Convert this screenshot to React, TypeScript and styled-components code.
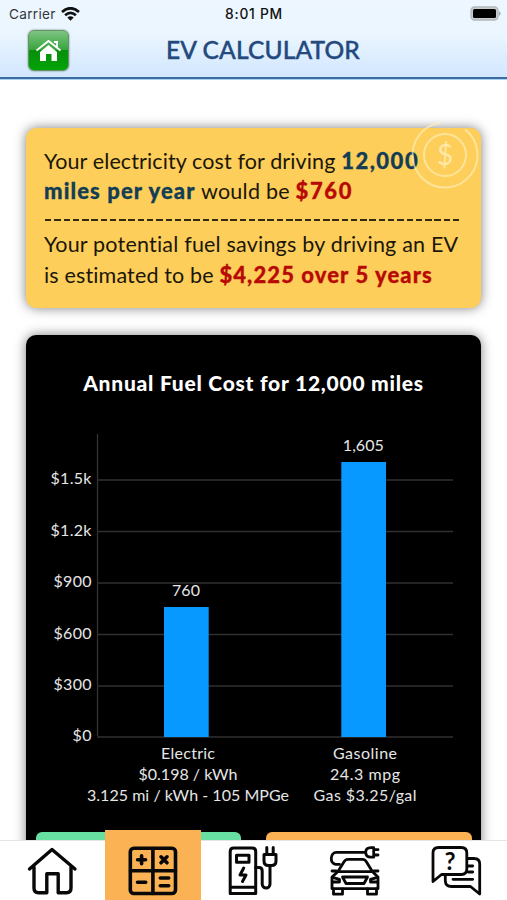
import React from "react";
import styled, { createGlobalStyle } from "styled-components";

const Global = createGlobalStyle`
  * { box-sizing: border-box; }
  html, body { margin: 0; padding: 0; background: #fff; }
  body { font-family: Lato, "Open Sans", sans-serif; overflow: hidden; }
`;

const Screen = styled.div`
  width: 507px;
  height: 900px;
  display: flex;
  flex-direction: column;
  overflow: hidden;
  background: #fff;
`;

const Header = styled.header`
  flex: none;
  height: 80px;
  background: linear-gradient(#eef7ff 0%, #eaf5ff 45%, #d2e7ff 96%);
  border-bottom: 1px solid #a9d2f5;
  box-shadow: inset 0 -2px 0 #3c6d9e;
`;

const StatusBar = styled.div`
  display: grid;
  grid-template-columns: 1fr auto 1fr;
  align-items: center;
  height: 28px;
  padding: 0 6px 0 9px;
  font: 400 13.6px/28px Inter, sans-serif;
  color: #33363a;
`;

const Carrier = styled.div`
  display: flex;
  align-items: center;
  gap: 5px;
  letter-spacing: 0.3px;
`;

const Clock = styled.div`
  margin-left: -2px;
  font-weight: 500;
  font-size: 13.8px;
  letter-spacing: 0.75px;
  color: #111;
`;

const Battery = styled.svg`
  justify-self: end;
  display: block;
  margin-top: -2px;
`;

const TitleRow = styled.div`
  display: grid;
  grid-template-columns: 28px 41px 1fr 50px;
  align-items: center;
  height: 45px;
`;

const HomeButton = styled.button`
  grid-column: 2;
  width: 41px;
  height: 41px;
  padding: 0;
  display: grid;
  place-items: center;
  border: 1px solid #66926b;
  border-radius: 6px;
  background: linear-gradient(#7fc484 0%, #35a43b 49%, #078f0c 50%, #03a307 100%);
  box-shadow: 0 0 2px #587b5c;
`;

const Title = styled.h1`
  grid-column: 3;
  margin: -2px 0 0 -1px;
  padding-left: 98px;
  font-size: 24.6px;
  font-weight: 500;
  line-height: 44px;
  letter-spacing: 0.1px;
  color: #23497d;
  -webkit-text-stroke: 0.4px #23497d;
  white-space: nowrap;
`;

const Content = styled.main`
  flex: 1;
  min-height: 0;
  padding: 48px 26px 0;
  overflow: hidden;
`;

const Summary = styled.section`
  position: relative;
  height: 180px;
  padding: 18px 18px 0;
  border-radius: 10px;
  background: #fdce5a;
  box-shadow: 0 0 12px rgba(0, 0, 0, 0.5);
  color: #1a1608;
`;

const Line = styled.div<{ $spacing: number }>`
  height: 29.5px;
  font-size: 21.5px;
  line-height: 29.5px;
  letter-spacing: ${(p) => p.$spacing}px;
  white-space: nowrap;
`;

const Strong = styled.b<{ $tone: "navy" | "red"; $spacing?: number }>`
  font-size: 22px;
  font-weight: 900;
  letter-spacing: ${(p) => p.$spacing ?? 1.1}px;
  color: ${(p) => (p.$tone === "navy" ? "#123d55" : "#b80a05")};
  -webkit-text-stroke: 0.3px currentColor;
`;

const Rule = styled.div`
  width: 417px;
  height: 2px;
  margin: 14px 0 9px 1px;
  background: repeating-linear-gradient(90deg, #33290f 0 6.5px, transparent 6.5px 9.27px);
`;

const Coin = styled.svg`
  position: absolute;
  top: -7px;
  right: 1px;
`;

const ChartCard = styled.section`
  height: 560px;
  margin-top: 27px;
  padding-top: 34px;
  border-radius: 10px;
  background: #000;
  box-shadow: 0 0 12px rgba(0, 0, 0, 0.5);
  color: #e4e4e4;
`;

const ChartTitle = styled.h2`
  margin: 0;
  height: 28px;
  text-align: center;
  font-size: 21px;
  font-weight: 900;
  line-height: 28px;
  letter-spacing: 0.75px;
  color: #fff;
  white-space: nowrap;
`;

const Plot = styled.svg`
  display: block;
  margin-top: 27px;
  font-family: Lato, sans-serif;
  font-size: 16px;
`;

const Actions = styled.div`
  display: grid;
  grid-template-columns: 205px 206px;
  gap: 25px;
  padding-left: 10px;
  margin-top: 1px;
`;

const Action = styled.button<{ $color: string }>`
  height: 44px;
  border: 0;
  border-radius: 6px;
  background: ${(p) => p.$color};
`;

const TabBar = styled.nav`
  position: relative;
  flex: none;
  height: 60px;
  display: grid;
  grid-template-columns: 105px 96px 102px 102px 102px;
  grid-template-rows: 59px;
  align-items: end;
  background: #fff;
  border-top: 1px solid #e4e4e4;
`;

const Tab = styled.button<{ $active?: boolean }>`
  height: ${(p) => (p.$active ? 70 : 59)}px;
  padding: 0;
  border: 0;
  display: grid;
  justify-items: center;
  align-items: end;
  background: ${(p) => (p.$active ? "#fbb254" : "transparent")};
`;

const Glyph = styled.svg<{ $weight?: number }>`
  display: block;
  width: 60px;
  height: 59px;
  fill: none;
  stroke: #080808;
  stroke-width: ${(p) => p.$weight ?? 3};
  stroke-linecap: round;
  stroke-linejoin: round;
`;

const GlyphMark = styled.text`
  font: 700 24px Lato, sans-serif;
  fill: #080808;
  stroke: none;
  text-anchor: middle;
`;

const CoinMark = styled.text`
  font: 400 28px Lato, sans-serif;
  fill: #ffe9a8;
  stroke: none;
  text-anchor: middle;
`;

const ticks = [
  { label: "$1.5k", y: 53, w: 41 },
  { label: "$1.2k", y: 104.5, w: 41 },
  { label: "$900", y: 156, w: 38 },
  { label: "$600", y: 207.5, w: 38 },
  { label: "$300", y: 259, w: 38 },
  { label: "$0", y: 310, w: 19 },
];

const bars = [
  { value: "760", x: 138, y: 181, labelW: 28, captions: [["Electric", 54], ["$0.198 / kWh", 99], ["3.125 mi / kWh - 105 MPGe", 202]], cx: 162 },
  { value: "1,605", x: 315.3, y: 36, labelW: 41, captions: [["Gasoline", 64], ["24.3 mpg", 70], ["Gas $3.25/gal", 103]], cx: 339 },
] as const;

function Chart() {
  return (
    <Plot width="455" height="407" viewBox="0 0 455 407" fill="#e6e6e6">
      <path d="M71.5 10V312" stroke="#333" strokeWidth="1.3" />
      {ticks.map((t) => (
        <g key={t.label}>
          <path d={`M71 ${t.y + 3}H427`} stroke="#303030" strokeWidth="1.5" />
          <text x={65.5 - t.w} y={t.y + 7} textLength={t.w}>{t.label}</text>
        </g>
      ))}
      {bars.map((b) => (
        <g key={b.value}>
          <rect x={b.x} y={b.y + 2} width="44.7" height={311 - b.y} fill="#0799ff" />
          <text x={b.x + 22 - b.labelW / 2} y={b.y - 9} textLength={b.labelW}>{b.value}</text>
          {b.captions.map(([text, w], i) => (
            <text key={text} x={b.cx - w / 2} y={334.8 + i * 21.3} textLength={w}>{text}</text>
          ))}
        </g>
      ))}
    </Plot>
  );
}

export default function App() {
  return (
    <Screen>
      <Global />
      <Header>
        <StatusBar>
          <Carrier>
            Carrier
            <svg width="19" height="14" viewBox="0 0 19 14" fill="none" stroke="#111" strokeWidth="2.7">
              <path d="M1 5Q9.5-2.5 18 5M4.1 8.3Q9.5 3.5 14.9 8.3" />
              <path d="M6.3 10.6Q9.5 7.9 12.7 10.6L9.5 13.7Z" fill="#111" stroke="none" />
            </svg>
          </Carrier>
          <Clock>8:01 PM</Clock>
          <Battery width="31" height="15" viewBox="0 0 31 15">
            <rect x="1" y="1" width="27" height="13" rx="3.5" fill="#c9cdd0" stroke="#b3b8bb" strokeWidth="1.3" />
            <rect x="3" y="3" width="23" height="9" rx="1.5" fill="#000" />
            <path d="M29 5Q32 7.5 29 10Z" fill="#9da3a8" />
          </Battery>
        </StatusBar>
        <TitleRow>
          <HomeButton aria-label="Home">
            <svg width="27" height="25" viewBox="0 0 27 25">
              <path d="M5 14L13.5 7L22 14V23H16.5V16H11V23H5Z" fill="#fff" />
              <path d="M1.5 12.5L13.5 3L25.5 12.5M19 4H22V9" fill="none" stroke="#fff" strokeWidth="1.8" />
            </svg>
          </HomeButton>
          <Title>EV CALCULATOR</Title>
        </TitleRow>
      </Header>
      <Content>
        <Summary>
          <Line $spacing={0.12}>Your electricity cost for driving <Strong $tone="navy" $spacing={1.5}>12,000</Strong></Line>
          <Line $spacing={0.25}><Strong $tone="navy">miles per year</Strong> would be <Strong $tone="red" $spacing={1.6}>$760</Strong></Line>
          <Rule />
          <Line $spacing={0.2}>Your potential fuel savings by driving an EV</Line>
          <Line $spacing={0.15}>is estimated to be <Strong $tone="red">$4,225 over 5 years</Strong></Line>
          <Coin width="70" height="70" viewBox="0 0 70 70" fill="none" stroke="#fff0be" strokeOpacity=".65" strokeWidth="2">
            <circle cx="35" cy="34" r="32.5" strokeDasharray="178 26" transform="rotate(-52 35 34)" />
            <circle cx="35" cy="34" r="21" />
            <CoinMark x="35" y="44">$</CoinMark>
          </Coin>
        </Summary>
        <ChartCard>
          <ChartTitle>Annual Fuel Cost for 12,000 miles</ChartTitle>
          <Chart />
          <Actions>
            <Action $color="#67dfa2" aria-label="Electric" />
            <Action $color="#fbb254" aria-label="Gasoline" />
          </Actions>
        </ChartCard>
      </Content>
      <TabBar>
        <Tab aria-label="Home">
          <Glyph viewBox="0 0 60 59" $weight={3.4}>
            <path d="M6.5 28L29 8.5L52 28M11 26V47Q11 51.7 15.5 51.7H23.8V32.7H35.2V51.7H43.5Q48 51.7 48 47V26" />
          </Glyph>
        </Tab>
        <Tab $active aria-label="Calculator">
          <Glyph viewBox="0 0 60 59" $weight={3.6}>
            <rect x="7.3" y="7.3" width="45.2" height="45.2" rx="3.5" />
            <path d="M29.9 7.5V52.5M7.5 29.8H52.5M18.6 14.8V22.8M14.6 18.8H22.6M38 15.8L44 21.8M44 15.8L38 21.8M14.5 41.2H22.7M37.3 37H45.7M37.3 44.7H45.7" />
          </Glyph>
        </Tab>
        <Tab aria-label="Charging">
          <Glyph viewBox="0 0 60 59" $weight={3}>
            <path d="M8.2 52.5V10.5Q8.2 7 11.7 7H30Q33.7 7 33.7 10.5V52.5ZM8.2 46.2H33.7" />
            <rect x="14.5" y="14.2" width="12.5" height="7" />
            <path d="M21.7 27L18 34H24L20.5 40.5" />
            <path d="M33.7 26.5H37Q40.2 26.5 40.2 30V43A3.9 4 0 0 0 48 43V24.5M42 13.5H54V20Q54 24.5 49.5 24.5H46.5Q42 24.5 42 20ZM44.8 6.5V13M51.2 6.5V13" />
          </Glyph>
        </Tab>
        <Tab aria-label="Vehicles">
          <Glyph viewBox="0 0 60 59" $weight={2.8}>
            <path d="M15.5 23.3H11.5C5.5 22.5 6 11.3 12.5 11.3H41.5M49.7 6.7H47C43.5 6.7 41.7 8.5 41.7 11.3S43.5 16.2 47 16.2H49.7ZM50 8.7H54M50 14H54" />
            <path d="M13.8 30.7L20.2 20.5Q21.4 18.3 24 18.3H38.5Q41 18.3 42.2 20.5L48.5 30.7M8 30H12M54 30H50M13.8 30.7H48.5L54 36V47.7H8V36Z" />
            <path d="M18.5 36H43.5L40 42.5H22ZM8.5 36.3L15.5 38.3V41H8.5M53.5 36.3L46.5 38.3V41H53.5M9.5 48V53.2H18.5V48M43.5 48V53.2H52.5V48" />
          </Glyph>
        </Tab>
        <Tab aria-label="Questions">
          <Glyph viewBox="0 0 60 59" $weight={2.8}>
            <path d="M7 40.5V12Q7 6.5 12.5 6.5H35.2Q40.8 6.5 40.8 12V28Q40.8 33.5 35.2 33.5H15.5Z" />
            <path d="M42 17.5H48Q53.7 17.5 53.7 23V53L44.5 45.5H25.5Q19.3 45.5 19.3 39.5V34M42 25H46.7M42 31H46.7M27 38.3H46.7" />
            <GlyphMark x="24" y="28.5">?</GlyphMark>
          </Glyph>
        </Tab>
      </TabBar>
    </Screen>
  );
}
